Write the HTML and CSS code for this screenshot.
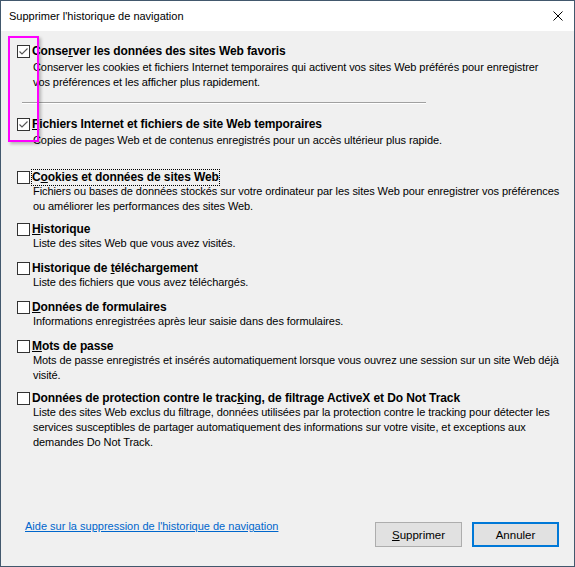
FILE: index.html
```html
<!DOCTYPE html>
<html lang="fr">
<head>
  <meta charset="UTF-8" />
  <title>Supprimer l'historique de navigation</title>
  <link rel="stylesheet" href="styles.css">
</head>
<body>
  <div class="fenetre">
    <div class="barre-titre">
      <span class="titre">Supprimer l'historique de navigation</span>
      <svg class="fermer" width="10" height="10" viewBox="0 0 10 10">
        <path d="M0.5 0.5 L9.5 9.5 M9.5 0.5 L0.5 9.5" stroke="#000" stroke-width="1" fill="none"/>
      </svg>
    </div>

    <div class="contenu">
      <div class="option premiere">
        <div class="ligne-titre">
          <span class="case cochee"><svg width="11" height="11" viewBox="0 0 11 11"><path d="M1.5 5.5 L4 8 L9.5 2.5" stroke="#555" stroke-width="1.1" fill="none"/></svg></span>
          <span class="libelle">Conse<u>r</u>ver les données des sites Web favoris</span>
        </div>
        <div class="description">Conserver les cookies et fichiers Internet temporaires qui activent vos sites Web préférés pour enregistrer vos préférences et les afficher plus rapidement.</div>
      </div>

      <div class="separateur"></div>

      <div class="option deuxieme">
        <div class="ligne-titre">
          <span class="case cochee"><svg width="11" height="11" viewBox="0 0 11 11"><path d="M1.5 5.5 L4 8 L9.5 2.5" stroke="#555" stroke-width="1.1" fill="none"/></svg></span>
          <span class="libelle"><u>F</u>ichiers Internet et fichiers de site Web temporaires</span>
        </div>
        <div class="description">Copies de pages Web et de contenus enregistrés pour un accès ultérieur plus rapide.</div>
      </div>

      <div class="option double">
        <div class="ligne-titre">
          <span class="case"></span>
          <span class="libelle focus">C<u>o</u>okies et données de sites Web</span>
        </div>
        <div class="description">Fichiers ou bases de données stockés sur votre ordinateur par les sites Web pour enregistrer vos préférences ou améliorer les performances des sites Web.</div>
      </div>

      <div class="option">
        <div class="ligne-titre">
          <span class="case"></span>
          <span class="libelle"><u>H</u>istorique</span>
        </div>
        <div class="description">Liste des sites Web que vous avez visités.</div>
      </div>

      <div class="option">
        <div class="ligne-titre">
          <span class="case"></span>
          <span class="libelle">Historique de <u>t</u>éléchargement</span>
        </div>
        <div class="description">Liste des fichiers que vous avez téléchargés.</div>
      </div>

      <div class="option">
        <div class="ligne-titre">
          <span class="case"></span>
          <span class="libelle"><u>D</u>onnées de formulaires</span>
        </div>
        <div class="description">Informations enregistrées après leur saisie dans des formulaires.</div>
      </div>

      <div class="option double">
        <div class="ligne-titre">
          <span class="case"></span>
          <span class="libelle"><u>M</u>ots de passe</span>
        </div>
        <div class="description">Mots de passe enregistrés et insérés automatiquement lorsque vous ouvrez une session sur un site Web déjà visité.</div>
      </div>

      <div class="option">
        <div class="ligne-titre">
          <span class="case"></span>
          <span class="libelle">Données de protection contre le trac<u>k</u>ing, de filtrage ActiveX et Do Not Track</span>
        </div>
        <div class="description">Liste des sites Web exclus du filtrage, données utilisées par la protection contre le tracking pour détecter les services susceptibles de partager automatiquement des informations sur votre visite, et exceptions aux demandes Do Not Track.</div>
      </div>
    </div>

    <div class="pied">
      <a class="aide" href="#">Aide sur la suppression de l'historique de navigation</a>
      <div class="boutons">
        <button class="bouton"><u>S</u>upprimer</button>
        <button class="bouton defaut">Annuler</button>
      </div>
    </div>

    <div class="surlignage"></div>
  </div>
</body>
</html>
```

FILE: styles.css
```css
html, body {
  margin: 0;
  padding: 0;
}

body {
  font-family: 'Liberation Sans', Arial, sans-serif;
  font-size: 11px;
  color: #000;
  background: #f0f0f0;
}

.fenetre {
  position: relative;
  width: 575px;
  height: 567px;
  box-sizing: border-box;
  border: 1px solid #42586d;
  background-color: #f0f0f0;
  display: flex;
  flex-direction: column;
}

.barre-titre {
  height: 30px;
  background-color: #fff;
  display: flex;
  align-items: center;
  justify-content: space-between;
  padding: 0 11px 0 8px;
}

.titre {
  font-size: 11px;
  margin-top: -1px;
}

.contenu {
  padding: 13px 3px 0 16px;
}

.option {
  margin-bottom: 10px;
}

.option.double {
  margin-bottom: 8px;
}

.option.premiere {
  margin-bottom: 12px;
}

.option.deuxieme {
  margin-bottom: 22px;
}

.ligne-titre {
  display: flex;
  align-items: center;
  height: 15px;
}

.case {
  width: 13px;
  height: 13px;
  box-sizing: border-box;
  border: 1px solid #333;
  background-color: #fff;
  margin-right: 2px;
  display: flex;
  align-items: center;
  justify-content: center;
  flex-shrink: 0;
}

.libelle {
  font-size: 12px;
  font-weight: bold;
  line-height: 15px;
  letter-spacing: -0.1px;
}

.libelle.focus {
  outline: 1px dotted #000;
  outline-offset: 0;
}

.description {
  padding-left: 16px;
  line-height: 15px;
  margin-top: -1px;
  letter-spacing: -0.08px;
}

.premiere .description,
.deuxieme .description {
  margin-top: 1px;
}

.premiere .description {
  padding-right: 16px;
}

.separateur {
  margin: 0 0 13px 5px;
  width: 404px;
  border-top: 1px solid #a0a0a0;
  border-bottom: 1px solid #fff;
}

.pied {
  margin-top: auto;
  display: flex;
  justify-content: space-between;
  align-items: flex-start;
  padding: 0 15px 19px 24px;
}

.aide {
  color: #0066cc;
  text-decoration: underline;
  line-height: 15px;
  margin-top: 1px;
}

.boutons {
  display: flex;
  gap: 10px;
  margin-top: 4px;
}

.bouton {
  width: 87px;
  height: 25px;
  box-sizing: border-box;
  border: 1px solid #adadad;
  background-color: #e1e1e1;
  font-family: inherit;
  font-size: 11.5px;
  color: #000;
  padding: 0;
}

.bouton.defaut {
  border: 2px solid #0078d7;
}

.surlignage {
  position: absolute;
  left: 7px;
  top: 35px;
  width: 31px;
  height: 106px;
  box-sizing: border-box;
  border: 2px solid #ff00ff;
  box-shadow: 2px 2px 3px rgba(0, 0, 0, 0.25);
}
```
